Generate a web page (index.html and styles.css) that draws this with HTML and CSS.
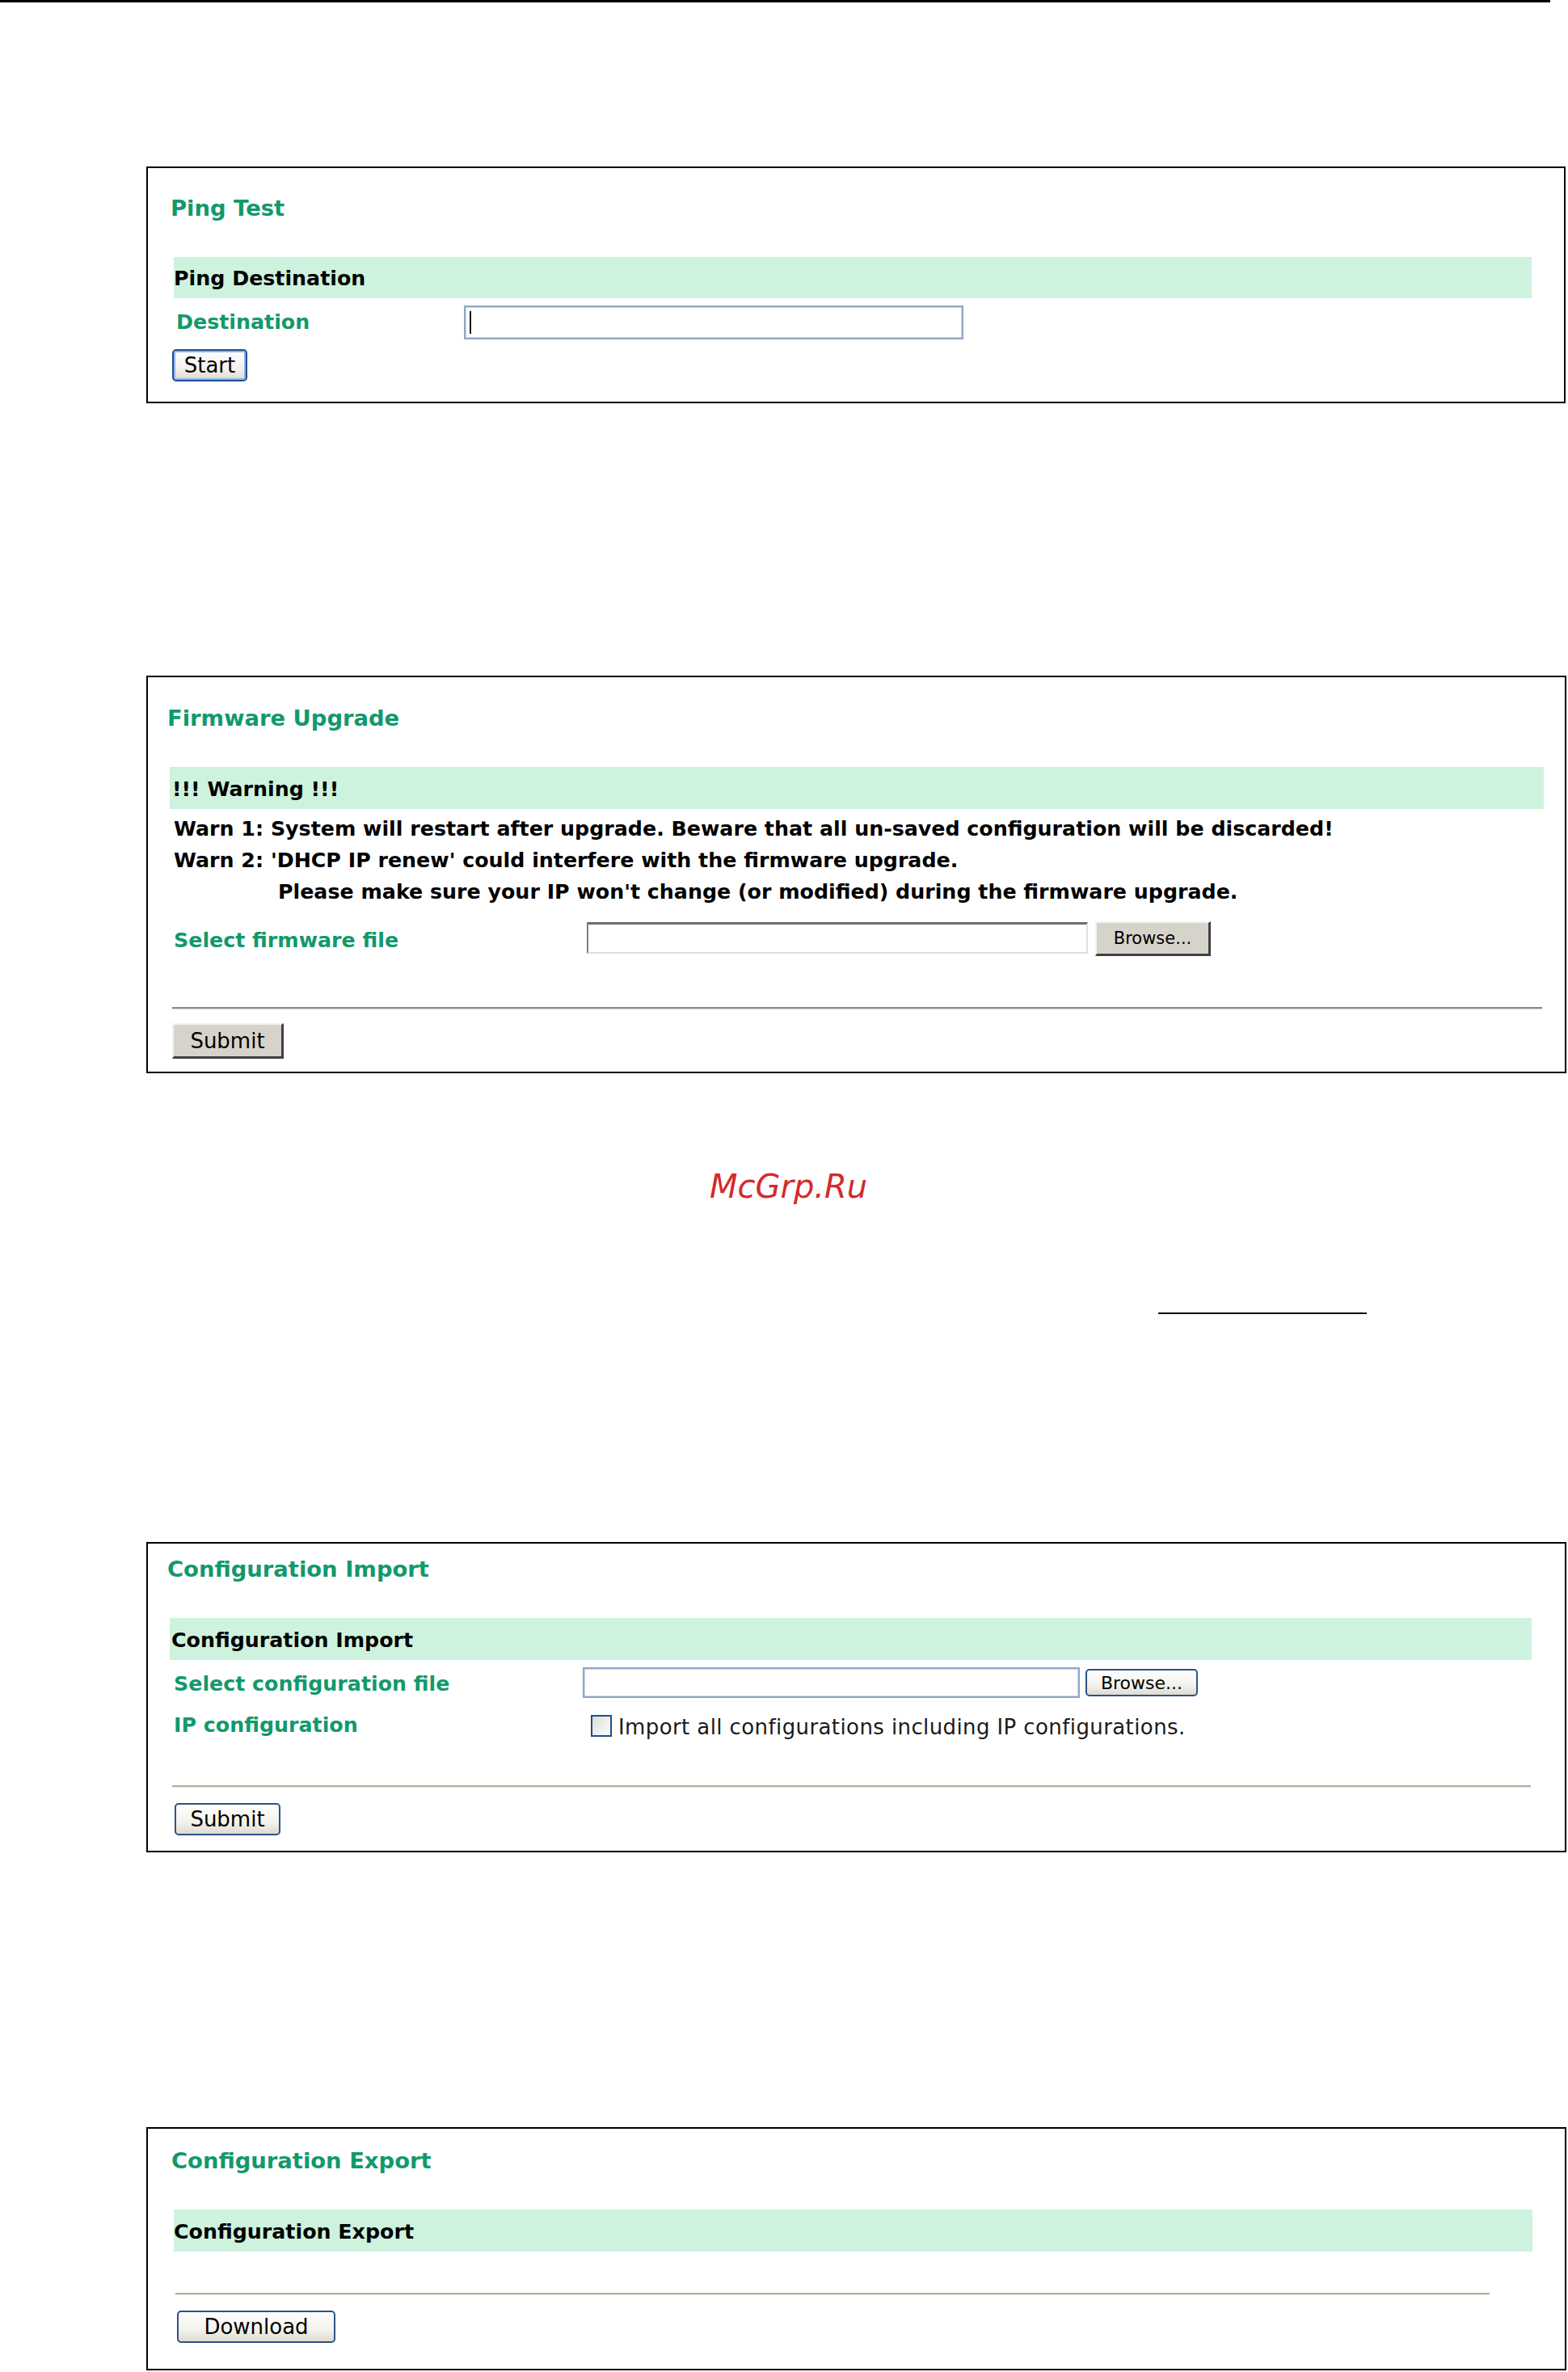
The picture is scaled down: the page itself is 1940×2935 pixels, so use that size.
FILE: index.html
```html
<!DOCTYPE html>
<html>
<head>
<meta charset="utf-8">
<title>Ping / Firmware / Configuration</title>
<link rel="stylesheet" href="styles.css">
</head>
<body>
<div class="topbar"></div>
<div class="page">

  <section class="panel panel-ping">
    <h2 class="title">Ping Test</h2>
    <div class="band">Ping Destination</div>
    <div class="row row-ping">
      <div class="label">Destination</div>
      <div class="textbox xp-text"><span class="caret"></span></div>
    </div>
    <button class="btn xp-btn xp-focus btn-start">Start</button>
  </section>

  <section class="panel panel-fw">
    <h2 class="title">Firmware Upgrade</h2>
    <div class="band">!!! Warning !!!</div>
    <div class="warns">
      <div>Warn 1: System will restart after upgrade. Beware that all un-saved configuration will be discarded!</div>
      <div>Warn 2: 'DHCP IP renew' could interfere with the firmware upgrade.</div>
      <div class="indent">Please make sure your IP won't change (or modified) during the firmware upgrade.</div>
    </div>
    <div class="row row-fw">
      <div class="label">Select firmware file</div>
      <div class="textbox classic-text"></div>
      <button class="btn classic-btn btn-browse-fw">Browse...</button>
    </div>
    <div class="rule rule-gray"></div>
    <button class="btn classic-btn btn-submit-fw">Submit</button>
  </section>

  <div class="watermark">McGrp.Ru</div>
  <div class="underline"></div>

  <section class="panel panel-imp">
    <h2 class="title">Configuration Import</h2>
    <div class="band">Configuration Import</div>
    <div class="row row-imp1">
      <div class="label">Select configuration file</div>
      <div class="textbox xp-text"></div>
      <button class="btn xp-btn btn-browse-imp">Browse...</button>
    </div>
    <div class="row row-imp2">
      <div class="label">IP configuration</div>
      <span class="checkbox"></span>
      <span class="check-text">Import all configurations including IP configurations.</span>
    </div>
    <div class="rule rule-tan"></div>
    <button class="btn xp-btn btn-submit-imp">Submit</button>
  </section>

  <section class="panel panel-exp">
    <h2 class="title">Configuration Export</h2>
    <div class="band">Configuration Export</div>
    <div class="rule rule-tan"></div>
    <button class="btn xp-btn btn-download">Download</button>
  </section>

</div>
</body>
</html>
```

FILE: styles.css
```css
html, body {
  margin: 0;
  padding: 0;
  background: #ffffff;
}
body {
  width: 1940px;
  height: 2935px;
  overflow: hidden;
  font-family: "DejaVu Sans", Verdana, sans-serif;
  color: #000;
}

.topbar {
  width: 1918px;
  height: 3px;
  background: #000;
}

.page {
  padding-left: 181px;
}

.panel {
  box-sizing: border-box;
  width: 1757px;
  border: 2px solid #000;
  background: #fff;
}

.title {
  margin: 0;
  font-size: 27.4px;
  line-height: 32px;
  font-weight: bold;
  color: #12996b;
}

.band {
  box-sizing: border-box;
  height: 52px;
  padding-top: 4px;
  line-height: 48px;
  background: #cdf3de;
  font-size: 25.3px;
  font-weight: bold;
  color: #000;
  margin-top: 44px;
}

.label {
  box-sizing: border-box;
  font-size: 25.3px;
  font-weight: bold;
  color: #12996b;
  flex: none;
}

.row {
  display: flex;
  align-items: center;
}

.textbox {
  box-sizing: border-box;
  background: #fff;
  flex: none;
}

.xp-text {
  border: 2px solid #8fa8c8;
  box-shadow: inset 0 0 0 1px #c9d6e8;
}

.classic-text {
  border-top: 3px solid #6f6f6f;
  border-left: 2px solid #808080;
  border-right: 2px solid #e2e0da;
  border-bottom: 2px solid #e2e0da;
}

.caret {
  display: block;
  width: 2px;
  height: 28px;
  margin: 5px 0 0 5px;
  background: #111;
}

.btn {
  box-sizing: border-box;
  display: flex;
  align-items: center;
  justify-content: center;
  padding: 0;
  font-family: "DejaVu Sans", Tahoma, sans-serif;
  font-size: 26px;
  color: #000;
  flex: none;
}

.xp-btn {
  border: 2px solid #2c5289;
  border-radius: 5px;
  background: linear-gradient(#ffffff, #f3f2ec 60%, #dedbd0);
}

.xp-focus {
  border: 2px solid #244f92;
  box-shadow: inset 0 0 0 2px #8db2ea;
}

.classic-btn {
  border-top: 2px solid #f4f3ef;
  border-left: 2px solid #f4f3ef;
  border-right: 3px solid #404040;
  border-bottom: 3px solid #404040;
  background: #d6d3cb;
  border-radius: 0;
}

.rule {
  height: 3px;
}
.rule-gray {
  border-top: 2px solid #8a8a8a;
  height: 1px;
  background: #d6d6d6;
}
.rule-tan {
  border-top: 2px solid #b3ae9c;
  height: 1px;
  background: #e8e6dc;
}

/* ---- Ping panel ---- */
.panel-ping {
  margin-top: 203px;
  width: 1756px;
  padding: 34px 0 25px 0;
}
.panel-ping .title { padding-left: 28px; }
.panel-ping .band {
  margin-left: 32px;
  width: 1680px;
  height: 51px;
  padding-top: 3px;
}
.row-ping {
  margin-top: 9px;
  margin-left: 32px;
  height: 42px;
}
.row-ping .label {
  width: 359px;
  padding-left: 3px;
  line-height: 42px;
}
.row-ping .textbox {
  width: 618px;
  height: 42px;
}
.btn-start {
  margin-top: 12px;
  margin-left: 30px;
  width: 93px;
  height: 40px;
}

/* ---- Firmware panel ---- */
.panel-fw {
  margin-top: 337px;
  padding: 35px 0 16px 0;
}
.panel-fw .title { padding-left: 24px; }
.panel-fw .band {
  margin-left: 27px;
  width: 1700px;
  padding-left: 3px;
}
.warns {
  margin-top: 5px;
  margin-left: 32px;
  font-size: 25.3px;
  font-weight: bold;
  line-height: 39px;
}
.warns .indent {
  padding-left: 129px;
}
.row-fw {
  margin-top: 17px;
  margin-left: 32px;
  height: 43px;
  align-items: flex-start;
}
.row-fw .label {
  width: 511px;
  line-height: 43px;
  padding-top: 2px;
}
.row-fw .textbox {
  margin-top: 1px;
  width: 620px;
  height: 39px;
}
.btn-browse-fw {
  margin-left: 9px;
  width: 143px;
  height: 43px;
  font-size: 21px;
}
.panel-fw .rule {
  margin-top: 63px;
  margin-left: 30px;
  width: 1695px;
}
.btn-submit-fw {
  margin-top: 17px;
  margin-left: 30px;
  width: 138px;
  height: 44px;
}

/* ---- Watermark ---- */
.watermark {
  margin-top: 116px;
  margin-left: 697px;
  font-family: "DejaVu Sans", sans-serif;
  font-style: italic;
  font-size: 40px;
  line-height: 48px;
  color: #d42a2a;
}
.underline {
  margin-top: 132px;
  margin-left: 1252px;
  width: 258px;
  height: 2px;
  background: #000;
}

/* ---- Import panel ---- */
.panel-imp {
  margin-top: 282px;
  padding: 16px 0 19px 0;
}
.panel-imp .title { padding-left: 24px; }
.panel-imp .band {
  margin-left: 27px;
  width: 1685px;
  padding-left: 2px;
}
.row-imp1 {
  margin-top: 9px;
  margin-left: 32px;
  height: 38px;
}
.row-imp1 .label {
  width: 506px;
  line-height: 38px;
  padding-top: 4px;
}
.row-imp1 .textbox {
  width: 615px;
  height: 38px;
}
.btn-browse-imp {
  margin-left: 7px;
  width: 139px;
  height: 34px;
  font-size: 22px;
}
.row-imp2 {
  margin-top: 16px;
  margin-left: 32px;
  height: 36px;
}
.row-imp2 .label {
  width: 506px;
  line-height: 36px;
}
.checkbox {
  box-sizing: border-box;
  flex: none;
  margin-left: 10px;
  width: 26px;
  height: 27px;
  border: 2px solid #1f4f82;
  background: linear-gradient(135deg, #dcdcd6, #ffffff);
}
.check-text {
  margin-left: 8px;
  font-size: 26px;
  letter-spacing: 0.4px;
  line-height: 36px;
  padding-top: 4px;
  color: #1a1a1a;
  white-space: nowrap;
}
.panel-imp .rule {
  margin-top: 56px;
  margin-left: 30px;
  width: 1681px;
}
.btn-submit-imp {
  margin-top: 19px;
  margin-left: 33px;
  width: 131px;
  height: 40px;
}

/* ---- Export panel ---- */
.panel-exp {
  margin-top: 340px;
  padding: 24px 0 32px 0;
}
.panel-exp .title { padding-left: 29px; }
.panel-exp .band {
  margin-left: 32px;
  width: 1681px;
}
.panel-exp .rule {
  margin-top: 51px;
  margin-left: 34px;
  width: 1626px;
}
.btn-download {
  margin-top: 19px;
  margin-left: 36px;
  width: 196px;
  height: 40px;
}
```
